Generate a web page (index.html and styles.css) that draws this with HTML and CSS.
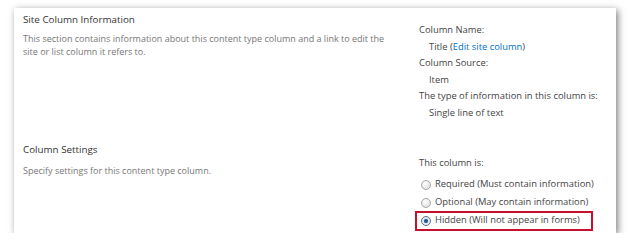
FILE: index.html
```html
<!DOCTYPE html>
<html>
	<head>
		<meta charset="UTF-8">
		<title>Site Column</title>
		<link rel="stylesheet" href="styles.css">
	</head>
	<body>
		<div class="panel">
			<div class="section first">
				<div class="info">
					<h3>Site Column Information</h3>
					<p>This section contains information about this content type column and a link to edit the site or list column it refers to.</p>
				</div>
				<div class="fields">
					<div class="label">Column Name:</div>
					<div class="value">Title (<a href="#">Edit site column</a>)</div>
					<div class="label">Column Source:</div>
					<div class="value">Item</div>
					<div class="label">The type of information in this column is:</div>
					<div class="value">Single line of text</div>
				</div>
			</div>
			<div class="section second">
				<div class="info">
					<h3>Column Settings</h3>
					<p>Specify settings for this content type column.</p>
				</div>
				<div class="fields">
					<div class="label">This column is:</div>
					<label class="opt"><input type="radio" name="status"> Required (Must contain information)</label>
					<label class="opt"><input type="radio" name="status"> Optional (May contain information)</label>
					<label class="opt marked"><input type="radio" name="status" checked> Hidden (Will not appear in forms)</label>
				</div>
			</div>
		</div>
	</body>
</html>
```
FILE: styles.css
```css
*{margin:0;padding:0;box-sizing:border-box;}
body{
	background:#fff;
	font-family:"Open Sans","Noto Sans",sans-serif;
	color:#444;
}
.panel{
	width:602px;
	height:225px;
	margin:8px 0 0 14px;
	background:#fff;
	box-shadow:2px 2px 7px rgba(0,0,0,.5);
	overflow:hidden;
}
.section{
	display:flex;
	padding:5px 0 0 9px;
}
.info{
	width:396px;
}
.info h3{
	font-size:9.8px;
	font-weight:normal;
	color:#333;
	line-height:14px;
}
.info p{
	font-size:9px;
	color:#777;
	line-height:13px;
	margin-top:5px;
	width:372px;
}
.second .info p{
	margin-top:7px;
}
.first{
	height:130px;
}
.fields{
	display:flex;
	flex-direction:column;
	align-items:flex-start;
	font-size:9.4px;
	line-height:16.5px;
	padding-top:9px;
}
.second .fields{
	padding-top:12px;
}
.value{
	padding-left:10px;
}
a{
	color:#0072c6;
	text-decoration:none;
}
.second .label{
	margin-bottom:4px;
}
.opt{
	display:flex;
	align-items:center;
	gap:4px;
	height:18px;
	padding:0 12px 0 3px;
	margin-left:-3px;
}
.opt.marked{
	outline:2px solid #c8102e;
	outline-offset:-1px;
}
.opt input{
	appearance:none;
	-webkit-appearance:none;
	width:10px;
	height:10px;
	border-radius:50%;
	border:1px solid #a8a8a8;
	background:radial-gradient(circle at 40% 35%,#fff 0,#e4e4e4 70%,#cfcfcf 100%);
	margin-left:2px;
}
.opt input:checked{
	border-color:#5a6f86;
	background:radial-gradient(circle,#1c4f80 0,#2d6aa3 30%,#dfe6ee 45%,#f4f6f8 100%);
}
```
